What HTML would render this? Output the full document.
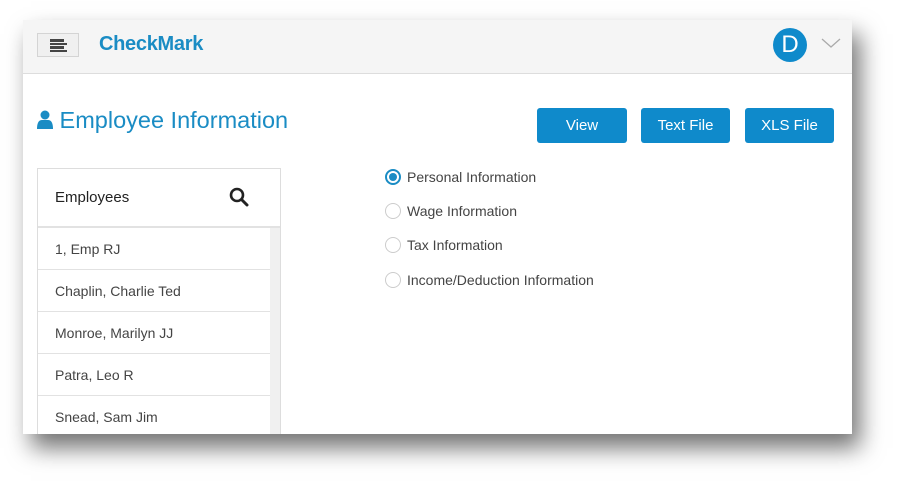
<!DOCTYPE html>
<html><head><style>
body{margin:0;width:906px;height:487px;background:#fff;font-family:"Liberation Sans",sans-serif;position:relative;overflow:hidden}
.win{position:absolute;left:23px;top:20px;width:829px;height:414px;background:#fff;box-shadow:8px 14px 22px rgba(0,0,0,.55);overflow:hidden}
.hdr{position:absolute;left:0;top:0;width:829px;height:53px;background:#f5f5f5;border-bottom:1px solid #ddd}
.ham{position:absolute;left:14px;top:13px;width:42px;height:24px;border:1px solid #d4d4d4;background:#f0f0f0;box-sizing:border-box}
.ham i{position:absolute;left:12px;height:2px;background:#444}
.brand{position:absolute;left:76px;top:13px;font-size:20px;color:#1a8cc4;font-weight:bold;letter-spacing:-.3px}
.av{position:absolute;left:750px;top:8px;width:34px;height:34px;border-radius:50%;background:#0f8acb;color:#fff;font-size:24px;text-align:center;line-height:34px}
.chev{position:absolute;left:798px;top:17px}
.title{position:absolute;left:14px;top:87px;font-size:23.5px;color:#1a8cc4}
.btn{position:absolute;top:88px;height:35px;background:#0f8acb;color:#fff;font-size:15px;text-align:center;line-height:35px;border-radius:3px}
.panel{position:absolute;left:14px;top:148px;width:244px;height:280px;border:1px solid #ddd;box-sizing:border-box}
.ph{height:57px;border-bottom:2px solid #e2e2e2;font-size:15px;color:#222;line-height:57px;padding-left:17px;position:relative}
.row{height:42px;border-bottom:1px solid #e2e2e2;font-size:14px;color:#444;line-height:42px;padding-left:17px;width:233px;box-sizing:border-box}
.sb{position:absolute;right:0;top:59px;width:10px;height:230px;background:#f0f0f0}
.r{position:absolute;left:362px;font-size:14px;color:#444}
.r span{display:inline-block;width:16px;height:16px;border:1px solid #ccc;border-radius:50%;box-sizing:border-box;vertical-align:-3px;margin-right:6px;position:relative}
</style></head><body>
<div class="win">
 <div class="hdr">
  <div class="ham"><i style="top:5px;width:14px;height:3px"></i><i style="top:9px;width:17px;height:2px"></i><i style="top:12px;width:14px;height:3px"></i><i style="top:16px;width:17px;height:2px"></i></div>
  <div class="brand">CheckMark</div>
  <div class="av">D</div>
  <svg class="chev" width="20" height="12"><path d="M1 2 L10 10 L19 2" fill="none" stroke="#aaa" stroke-width="1.3"/></svg>
 </div>
 <div class="title"><svg width="16" height="19" style="vertical-align:-1px"><circle cx="8" cy="5" r="4.5" fill="#1a8cc4"/><path d="M0 19 Q0 10 5 10 L11 10 Q16 10 16 19Z" fill="#1a8cc4"/></svg> Employee Information</div>
 <div class="btn" style="left:514px;width:90px">View</div>
 <div class="btn" style="left:618px;width:89px">Text File</div>
 <div class="btn" style="left:722px;width:89px">XLS File</div>
 <div class="panel">
  <div class="ph">Employees<svg width="20" height="20" style="position:absolute;left:191px;top:18px"><circle cx="8" cy="8" r="6" fill="none" stroke="#222" stroke-width="2.6"/><path d="M12.5 12.5 L18 18" stroke="#222" stroke-width="3" stroke-linecap="round"/></svg></div>
  <div class="row">1, Emp RJ</div>
  <div class="row">Chaplin, Charlie Ted</div>
  <div class="row">Monroe, Marilyn JJ</div>
  <div class="row">Patra, Leo R</div>
  <div class="row">Snead, Sam Jim</div>
  <div class="sb"></div>
 </div>
 <div class="r" style="top:149px"><span style="border:2px solid #1a8cc4"><b style="position:absolute;left:2px;top:2px;width:8px;height:8px;border-radius:50%;background:#1a8cc4"></b></span>Personal Information</div>
 <div class="r" style="top:183px"><span></span>Wage Information</div>
 <div class="r" style="top:217px"><span></span>Tax Information</div>
 <div class="r" style="top:252px"><span></span>Income/Deduction Information</div>
</div>
</body></html>
